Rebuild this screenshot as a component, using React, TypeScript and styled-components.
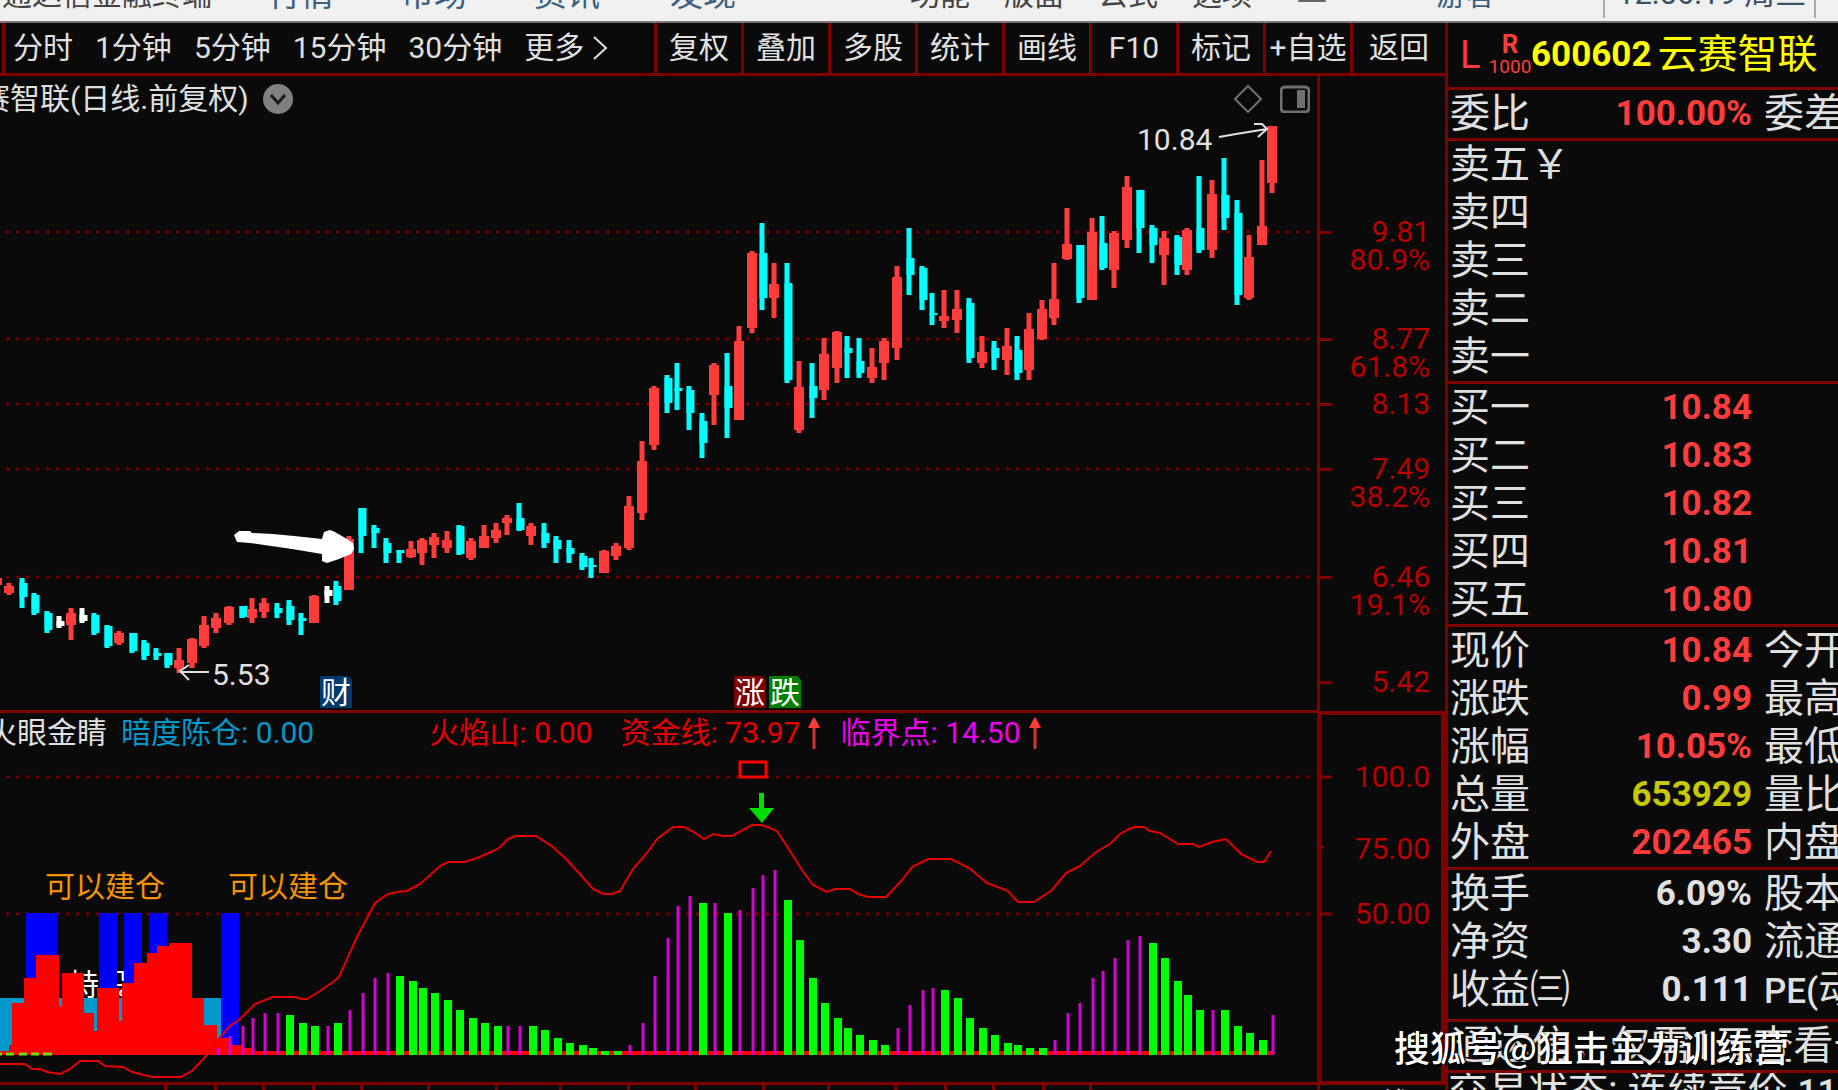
import React from "react";
import styled, { createGlobalStyle, css } from "styled-components";

const color = {
  bg: "#0a0a0a",
  line: "#800000",
  dot: "#6a0000",
  axis: "#b80000",
  text: "#e0e0e0",
  up: "#ff3c3c",
  down: "#00ffff",
  yellow: "#ffff00",
  volume: "#c8c800",
  muted: "#707070",
};

const mixedFont = `Roboto, "Noto Sans CJK SC", sans-serif`;
const cjkFont = `"Noto Sans CJK SC", Roboto, sans-serif`;

const GlobalStyle = createGlobalStyle`
  *, *::before, *::after { box-sizing: border-box; }
  body {
    margin: 0;
    background: ${color.bg};
    color: ${color.text};
    font-family: ${mixedFont};
    font-size: 30px;
    overflow: hidden;
  }
`;

const Screen = styled.div`
  position: relative;
  height: 100vh;
  display: flex;
  flex-direction: column;
  overflow: hidden;
`;

/* ---------- top menu ---------- */

const MenuBar = styled.nav`
  flex: none;
  height: 23px;
  display: flex;
  align-items: flex-end;
  background: #f0f0f0;
  border-bottom: 2px solid #777;
  overflow: hidden;
`;

const MenuItem = styled.a<{ $gap: number; $tone?: string; $size?: number }>`
  flex: none;
  margin: 0 0 14px ${(p) => p.$gap}px;
  font-family: ${cjkFont};
  font-size: ${(p) => p.$size ?? 30}px;
  line-height: 30px;
  color: ${(p) => p.$tone ?? "#444"};
  text-decoration: none;
  white-space: nowrap;
`;

const MailBase = styled.svg`
  flex: none;
  align-self: flex-start;
  margin-left: 46px;
`;

const Clock = styled.div`
  flex: none;
  margin-left: 107px;
  height: 18px;
  align-self: flex-start;
  display: flex;
  align-items: flex-end;
  padding: 0 8px 0 12px;
  border-left: 2px solid #aaa;
  border-right: 2px solid #aaa;
  white-space: nowrap;
`;

const ClockText = styled.time`
  margin-bottom: 9px;
  font-size: 31px;
  line-height: 30px;
  color: #3a5068;
`;

/* ---------- main split ---------- */

const Workspace = styled.main`
  flex: 1;
  min-height: 0;
  display: grid;
  grid-template-columns: minmax(0, 1fr) 393px;
`;

const ChartSide = styled.section`
  display: flex;
  flex-direction: column;
  min-width: 0;
  overflow: hidden;
`;

const Toolbar = styled.div`
  flex: none;
  height: 53px;
  display: flex;
  padding-left: 2px;
  border-bottom: 3px solid ${color.line};
`;

const PeriodGroup = styled.div`
  width: 652px;
  display: flex;
  align-items: center;
  gap: 22px;
  padding-left: 8px;
  border-left: 3px solid ${color.line};
`;

const buttonReset = css`
  margin: 0;
  padding: 0;
  border: 0;
  background: none;
  color: ${color.text};
  font-family: ${mixedFont};
  font-size: 30px;
  line-height: 40px;
  white-space: nowrap;
  cursor: pointer;
`;

const PeriodButton = styled.button`
  ${buttonReset}
  display: flex;
  align-items: center;
  gap: 8px;
`;

const ToolButton = styled.button<{ $last?: boolean }>`
  ${buttonReset}
  flex: ${(p) => (p.$last ? "1" : "0 0 87px")};
  border-left: 3px solid ${color.line};
`;

const IconButton = styled.button`
  ${buttonReset}
  display: flex;
`;

/* ---------- chart panes ---------- */

const Pane = styled.div`
  flex: none;
  display: grid;
  grid-template-columns: minmax(0, 1fr) 128px;
`;

const Plot = styled.div<{ $ruled?: boolean }>`
  min-width: 0;
  overflow: hidden;
  border: solid ${color.line};
  border-width: ${(p) => (p.$ruled ? "3px 0" : "0")};
`;

const Axis = styled.div`
  border-left: 3px solid ${color.line};
`;

const BoxedAxis = styled.div`
  margin-top: 1px;
  border: 4px solid ${color.line};
`;

const PaneHeader = styled.div<{ $height: number; $shift: number }>`
  height: ${(p) => p.$height}px;
  display: flex;
  align-items: center;
  padding-top: 2px;
  margin-left: -${(p) => p.$shift}px;
  line-height: 30px;
  white-space: nowrap;
`;

const ChartTitle = styled.h1`
  margin: 0 14px 0 0;
  font-size: 30px;
  font-weight: 400;
  line-height: 30px;
`;

const HeaderTools = styled.div`
  display: flex;
  gap: 18px;
  margin-left: auto;
  padding-right: 7px;
`;

const Reading = styled.span<{ $tone: string; $gap: number }>`
  display: flex;
  align-items: center;
  gap: 8px;
  margin-left: ${(p) => p.$gap}px;
  color: ${(p) => p.$tone};
  white-space: pre;
`;

const Drawing = styled.svg`
  display: block;
  width: 100%;
  font-family: ${mixedFont};
  font-size: 30px;
`;

const TimeStrip = styled.div`
  flex: 1;
  min-height: 0;
  display: grid;
  grid-template-columns: minmax(0, 1fr) 128px;
  overflow: hidden;
`;

const PeriodName = styled.div`
  border-left: 3px solid ${color.line};
  padding-left: 30px;
  font-size: 30px;
  line-height: 38px;
  white-space: nowrap;
`;

/* ---------- quote panel ---------- */

const QuotePanel = styled.aside`
  border-left: 3px solid ${color.line};
  overflow: hidden;
  font-size: 40px;
  line-height: 48px;
`;

const StockHeader = styled.header`
  height: 67px;
  display: flex;
  align-items: center;
  padding-left: 12px;
  border-bottom: 3px solid ${color.line};
  white-space: nowrap;
`;

const LevelMark = styled.span`
  width: 29px;
  font-size: 38px;
  color: ${color.up};
`;

const Margin = styled.span`
  width: 42px;
  display: flex;
  flex-direction: column;
  align-items: center;
  color: ${color.up};
`;

const MarginTop = styled.b`
  font-size: 26px;
  line-height: 24px;
`;

const MarginBase = styled.span`
  font-size: 19px;
  line-height: 22px;
`;

const StockCode = styled.b`
  font-size: 35px;
  color: ${color.yellow};
`;

const StockName = styled.h2`
  margin: 0 0 0 6px;
  font-size: 40px;
  font-weight: 400;
  color: ${color.yellow};
`;

const QuoteTable = styled.table`
  width: 100%;
  table-layout: fixed;
  border-collapse: collapse;
  td, th { padding: 0; }
`;

const QuoteBlock = styled.div<{ $pad?: number }>`
  padding: 0 0 ${(p) => p.$pad ?? 0}px 2px;
  border-bottom: 3px solid ${color.line};
`;

const NameCell = styled.th<{ $width?: number }>`
  width: ${(p) => (p.$width ? `${p.$width}px` : "auto")};
  height: 48px;
  font-weight: 400;
  text-align: left;
  white-space: nowrap;
`;

const ValueCell = styled.td<{ $tone?: string }>`
  width: 182px;
  font-size: 35px;
  font-weight: 700;
  text-align: right;
  white-space: nowrap;
  color: ${(p) => p.$tone ?? color.up};
`;

const SideCell = styled(NameCell)`
  && { padding-left: 12px; }
  overflow: hidden;
`;

const Latin = styled.span`
  font-size: 35px;
  font-weight: 500;
  line-height: 1;
`;

const Notice = styled.p<{ $line: number }>`
  margin: 0;
  padding-left: ${(p) => (p.$line > 40 ? 3 : 0)}px;
  line-height: ${(p) => p.$line}px;
  border-bottom: 3px solid ${color.line};
  white-space: nowrap;
  overflow: hidden;
`;

const Watermark = styled.div`
  position: absolute;
  right: 49px;
  bottom: 20px;
  font-family: ${cjkFont};
  font-size: 36px;
  font-weight: 500;
  line-height: 48px;
  color: #fff;
  text-shadow: 1px 1px 2px #000, 2px 2px 1px #000;
  white-space: nowrap;
`;

/* ---------- data ---------- */

type Tone = "r" | "c" | "w";
/* x of the wick, high, low, body top, body bottom */
type Candle = [Tone, number, number, number, number, number];

const candles: Candle[] = [
  ["r", -3, 578, 585, 578, 585], ["r", 9, 583, 595, 586, 593], ["c", 22, 578, 608, 583, 597],
  ["c", 34, 593, 615, 595, 613], ["c", 47, 611, 633, 613, 630], ["w", 59, 616, 628, 621, 626],
  ["r", 71, 608, 640, 613, 625], ["w", 82, 608, 623, 615, 621], ["c", 94, 613, 635, 615, 633],
  ["c", 107, 625, 648, 626, 646], ["r", 119, 631, 645, 633, 643], ["c", 132, 633, 653, 633, 651],
  ["c", 144, 640, 660, 643, 656], ["c", 156, 648, 660, 653, 656], ["c", 167, 653, 668, 653, 665],
  ["r", 179, 648, 673, 660, 668], ["r", 192, 638, 668, 639, 663], ["r", 204, 616, 648, 625, 646],
  ["r", 216, 613, 633, 618, 628], ["r", 229, 606, 625, 607, 623], ["c", 242, 606, 618, 606, 617],
  ["r", 252, 598, 623, 609, 618], ["r", 264, 598, 618, 603, 612], ["c", 277, 603, 618, 608, 613],
  ["c", 289, 600, 625, 606, 620], ["c", 301, 613, 635, 618, 621], ["r", 314, 595, 623, 596, 623],
  ["w", 327, 586, 603, 590, 596], ["c", 336, 581, 605, 586, 601], ["r", 349, 536, 590, 539, 590],
  ["c", 361, 508, 553, 508, 536], ["c", 374, 525, 548, 528, 533], ["c", 386, 538, 563, 543, 553],
  ["c", 399, 550, 563, 550, 553], ["r", 411, 541, 558, 549, 557], ["r", 422, 538, 565, 540, 553],
  ["r", 434, 533, 558, 537, 545], ["r", 447, 531, 553, 540, 548], ["c", 459, 525, 555, 526, 554],
  ["r", 471, 538, 560, 541, 558], ["r", 484, 525, 548, 536, 548], ["r", 496, 523, 543, 530, 538],
  ["r", 507, 515, 535, 518, 523], ["c", 519, 503, 531, 518, 530], ["r", 531, 523, 545, 526, 536],
  ["c", 544, 523, 548, 533, 543], ["c", 556, 536, 563, 540, 549], ["c", 569, 540, 563, 548, 554],
  ["c", 582, 553, 570, 556, 567], ["c", 591, 558, 578, 565, 567], ["r", 604, 550, 573, 551, 573],
  ["r", 616, 543, 560, 546, 556], ["r", 629, 496, 550, 506, 548], ["r", 642, 441, 520, 461, 513],
  ["r", 654, 386, 450, 388, 445], ["c", 667, 375, 413, 378, 403], ["c", 677, 363, 410, 388, 391],
  ["c", 689, 386, 430, 390, 413], ["c", 702, 413, 458, 421, 443], ["r", 714, 363, 425, 365, 395],
  ["c", 727, 353, 438, 386, 408], ["r", 739, 326, 420, 341, 420], ["r", 752, 251, 333, 253, 328],
  ["c", 762, 223, 310, 253, 298], ["r", 774, 263, 318, 284, 298], ["c", 787, 263, 383, 283, 380],
  ["r", 799, 361, 433, 387, 430], ["c", 812, 363, 418, 386, 398], ["r", 824, 338, 400, 354, 390],
  ["r", 837, 331, 383, 332, 368], ["c", 847, 336, 378, 348, 353], ["c", 859, 338, 378, 361, 373],
  ["r", 872, 348, 383, 367, 378], ["r", 884, 338, 380, 341, 363], ["r", 897, 266, 360, 277, 348],
  ["c", 909, 228, 295, 258, 275], ["c", 922, 266, 310, 268, 300], ["c", 932, 293, 325, 313, 315],
  ["r", 944, 290, 328, 316, 321], ["r", 957, 290, 333, 309, 320], ["c", 969, 298, 363, 303, 358],
  ["r", 982, 336, 368, 352, 363], ["c", 994, 341, 370, 348, 358], ["r", 1007, 328, 375, 346, 360],
  ["c", 1017, 336, 380, 350, 373], ["r", 1029, 313, 380, 329, 370], ["r", 1042, 300, 340, 309, 339],
  ["r", 1054, 263, 325, 299, 318], ["r", 1067, 208, 260, 244, 259], ["c", 1079, 245, 303, 245, 298],
  ["r", 1092, 218, 300, 232, 300], ["c", 1102, 216, 270, 243, 268], ["r", 1114, 231, 288, 233, 270],
  ["r", 1127, 176, 248, 187, 240], ["c", 1139, 190, 253, 190, 228], ["c", 1152, 225, 263, 228, 245],
  ["r", 1164, 231, 285, 238, 255], ["c", 1177, 235, 275, 237, 265], ["r", 1187, 228, 275, 230, 270],
  ["c", 1199, 176, 253, 228, 250], ["r", 1212, 180, 258, 194, 250], ["c", 1224, 158, 230, 195, 218],
  ["c", 1237, 200, 305, 213, 295], ["r", 1249, 235, 300, 257, 298], ["r", 1262, 160, 245, 226, 245],
  ["r", 1272, 126, 193, 126, 183],
];

/* m: rising, thin bar; g: falling, wide bar */
type Bar = ["m" | "g", number, number];

const bars: Bar[] = [
  ["m", 218, 1048], ["m", 230, 1036], ["m", 243, 1026], ["m", 253, 1018], ["m", 265, 1013],
  ["m", 278, 1013], ["g", 290, 1015], ["g", 303, 1023], ["g", 315, 1026], ["m", 328, 1026],
  ["g", 338, 1023], ["m", 350, 1010], ["m", 363, 993], ["m", 375, 978], ["m", 388, 973],
  ["g", 400, 976], ["g", 413, 981], ["g", 423, 988], ["g", 435, 993], ["g", 448, 1000],
  ["g", 460, 1010], ["g", 473, 1018], ["g", 485, 1023], ["g", 498, 1026], ["m", 508, 1026],
  ["m", 520, 1026], ["g", 533, 1026], ["g", 545, 1030], ["g", 558, 1038], ["g", 570, 1043],
  ["g", 583, 1045], ["g", 593, 1048], ["g", 605, 1051], ["g", 618, 1051], ["m", 630, 1045],
  ["m", 643, 1023], ["m", 655, 976], ["m", 668, 938], ["m", 678, 906], ["m", 690, 896],
  ["g", 703, 903], ["m", 715, 903], ["g", 728, 913], ["m", 740, 910], ["m", 753, 888],
  ["m", 763, 875], ["m", 775, 870], ["g", 788, 900], ["g", 800, 940], ["g", 813, 978],
  ["g", 825, 1003], ["g", 838, 1018], ["g", 848, 1028], ["g", 860, 1035], ["g", 873, 1040],
  ["g", 885, 1045], ["m", 898, 1028], ["m", 910, 1005], ["m", 923, 990], ["m", 933, 988],
  ["g", 945, 990], ["g", 958, 998], ["g", 970, 1018], ["g", 983, 1028], ["g", 995, 1035],
  ["g", 1008, 1043], ["g", 1018, 1045], ["g", 1030, 1048], ["g", 1043, 1048], ["m", 1055, 1040],
  ["m", 1068, 1013], ["m", 1080, 1003], ["m", 1093, 978], ["m", 1103, 971], ["m", 1115, 958],
  ["m", 1128, 940], ["m", 1140, 936], ["g", 1153, 943], ["g", 1165, 958], ["g", 1178, 981],
  ["g", 1188, 995], ["g", 1200, 1010], ["m", 1213, 1010], ["g", 1225, 1010], ["g", 1238, 1026],
  ["g", 1250, 1033], ["g", 1263, 1040], ["m", 1273, 1015],
];

/* left edge and top of each step of the red area */
const steps: [number, number][] = [
  [0, 1051], [9, 1045], [12, 1003], [24, 978], [36, 955], [59, 1006], [62, 973], [84, 1013],
  [94, 1031], [97, 988], [119, 1021], [122, 983], [134, 963], [147, 953], [157, 946], [169, 943],
  [192, 998], [204, 1025], [217, 1038], [229, 1045], [242, 1048], [252, 1051],
];

const areaPath = (() => {
  let d = "M0 1055";
  for (const [x, y] of steps) d += `H${x}V${y}`;
  return `${d}H1274V1055Z`;
})();

const blueBars: [number, number, number][] = [
  [26, 31, 1040], [99, 18, 1040], [124, 18, 1040], [149, 18, 1040], [221, 18, 1050],
];

const fundLine =
  "0,1064 25,1064 32,1069 40,1069 47,1072 60,1074 70,1069 80,1061 98,1061 105,1066 123,1067 132,1072 152,1077 181,1077 192,1071 207,1055 222,1035 230,1026 240,1019 255,1004 272,997 295,997 302,999 307,999 317,993 333,982 339,977 357,937 375,903 388,894 397,892 407,891 420,884 440,866 448,862 465,862 477,858 498,849 508,839 515,836 536,836 553,847 567,860 587,882 593,889 603,894 612,894 620,891 633,869 647,853 657,839 673,827 684,827 692,831 704,839 713,834 723,836 732,836 752,825 762,825 777,831 788,848 802,870 813,885 827,892 835,889 850,889 858,894 868,897 886,897 902,880 912,867 928,859 951,859 969,868 987,883 1008,891 1018,902 1034,902 1051,891 1066,873 1080,866 1096,852 1110,844 1120,834 1129,829 1135,827 1144,827 1150,831 1160,833 1178,844 1193,844 1199,847 1212,842 1226,839 1241,854 1257,862 1264,862 1271,851";

const priceLabels: [string, number][] = [
  ["9.81", 232], ["80.9%", 260], ["8.77", 339], ["61.8%", 367], ["8.13", 404], ["7.49", 469],
  ["38.2%", 497], ["6.46", 577], ["19.1%", 605], ["5.42", 682],
];
const priceTicks = [232, 339, 404, 469, 577, 682];
const indicatorLabels: [string, number][] = [["100.0", 777], ["75.00", 849], ["50.00", 914]];
const monthTicks = [165, 215, 263, 313, 361, 428, 496, 560, 628, 695, 763, 828, 895, 945, 993, 1043, 1090];

type Quote = [string, string?, string?, React.ReactNode?];

const sells: Quote[] = [["卖五￥"], ["卖四"], ["卖三"], ["卖二"], ["卖一"]];
const buys: Quote[] = [
  ["买一", "10.84"], ["买二", "10.83"], ["买三", "10.82"], ["买四", "10.81"], ["买五", "10.80"],
];
const prices: Quote[] = [
  ["现价", "10.84", color.up, "今开"],
  ["涨跌", "0.99", color.up, "最高"],
  ["涨幅", "10.05%", color.up, "最低"],
  ["总量", "653929", color.volume, "量比"],
  ["外盘", "202465", color.up, "内盘"],
];
const fundamentals: Quote[] = [
  ["换手", "6.09%", color.text, "股本"],
  ["净资", "3.30", color.text, "流通"],
  ["收益㈢", "0.111", color.text, <><Latin>PE(</Latin>动</>],
];

/* ---------- pieces ---------- */

const toneColor = { r: color.up, c: color.down, w: "#ffffff" };

function CandleMark({ data: [tone, x, high, low, top, bottom] }: { data: Candle }) {
  const wide = tone === "r";
  return (
    <g fill={toneColor[tone]}>
      <rect x={x - 2.5} y={high} width={5} height={low - high} />
      <rect x={wide ? x - 5 : x - 2.5} y={top} width={wide ? 10 : 8} height={bottom - top} />
    </g>
  );
}

function Gridline({ y }: { y: number }) {
  return <line x1={6} x2={1312} y1={y} y2={y} stroke={color.dot} strokeWidth={3} strokeDasharray="3 7" />;
}

function Badge({ x, fill, children }: { x: number; fill: string; children: string }) {
  return (
    <g>
      <path d={`M${x} 676h28l4 4v28h-32z`} fill={fill} />
      <text x={x + 1} y={703} fill="#fff">{children}</text>
    </g>
  );
}

function RiseArrow() {
  return (
    <svg width="12" height="32" viewBox="0 0 12 32" aria-hidden="true">
      <path d="M6 6V32" stroke="#d23434" strokeWidth="3" />
      <path d="M6 0L8 3L12 11H0L4 3Z" fill={color.up} />
    </svg>
  );
}

function QuoteRows({ rows, pad }: { rows: Quote[]; pad?: number }) {
  return (
    <QuoteBlock $pad={pad}>
      <QuoteTable>
        <tbody>
          {rows.map(([name, value, tone, side]) => (
            <tr key={name}>
              <NameCell scope="row" $width={120}>{name}</NameCell>
              <ValueCell $tone={tone}>{value}</ValueCell>
              <SideCell as={side ? "th" : "td"}>{side}</SideCell>
            </tr>
          ))}
        </tbody>
      </QuoteTable>
    </QuoteBlock>
  );
}

function PriceChart() {
  return (
    <Drawing height={590} viewBox="0 120 1317 590" preserveAspectRatio="xMinYMin slice" role="img" aria-label="日线">
      {priceTicks.slice(0, 5).map((y) => <Gridline key={y} y={y} />)}
      {candles.map((c) => <CandleMark key={c[1]} data={c} />)}
      <g fill="none" stroke={color.text} strokeWidth={2}>
        <path d="M1219 137L1236 134L1267 129M1254 124H1262L1267 129L1258 137" />
        <path d="M209 672H180M189 665L180 671L189 680" />
      </g>
      <text x={1137} y={150} fill={color.text}>10.84</text>
      <text x={212} y={685} fill={color.text}>5.53</text>
      <path
        fill="#fff"
        d="M234 535L239 531H250L252 533L273 534L294 536L322 539L324 532L330 530L335 532L347 539L353 543L354 549L351 554L339 559L327 563L322 561V554L292 549L250 543L237 542Z"
      />
      <Badge x={320} fill="#003a70">财</Badge>
      <Badge x={734} fill="#800000">涨</Badge>
      <Badge x={769} fill="#008000">跌</Badge>
    </Drawing>
  );
}

function IndicatorChart() {
  return (
    <Drawing height={331} viewBox="0 751 1317 331" preserveAspectRatio="xMinYMin slice" role="img" aria-label="火眼金睛">
      <Gridline y={777} />
      <Gridline y={914} />
      <text x={69} y={995} fill="#fff">持股</text>
      <rect x={0} y={998} width={221} height={57} fill="#0099cc" />
      {blueBars.map(([x, w, end]) => <rect key={x} x={x} y={913} width={w} height={end - 913} fill="#0000ff" />)}
      <path d={areaPath} fill="#ff0000" />
      <path d="M0 1054H2M6 1054H14M19 1054H27M31 1054H39M43 1054H52" stroke="#66e000" strokeWidth={3} />
      <polyline points={fundLine} fill="none" stroke="#e60000" strokeWidth={2} />
      {bars.map(([kind, x, top]) => {
        const w = kind === "g" ? 8 : 3;
        return (
          <rect key={x} x={x - w / 2} y={top} width={w} height={1055 - top} fill={kind === "g" ? "#00ff00" : "#d400d4"} />
        );
      })}
      <rect x={740} y={762} width={26} height={15} fill={color.bg} stroke="#ff0000" strokeWidth={3} />
      <path d="M759 793H764V808H774L762 823L749 808H759Z" fill="#00dd00" />
      <text x={45} y={897} fill="#f59300">可以建仓</text>
      <text x={228} y={897} fill="#f59300">可以建仓</text>
    </Drawing>
  );
}

const periods = ["分时", "1分钟", "5分钟", "15分钟", "30分钟"];
const tools = ["复权", "叠加", "多股", "统计", "画线", "F10", "标记", "+自选", "返回"];

export default function App() {
  return (
    <Screen>
      <GlobalStyle />
      <MenuBar>
        <MenuItem href="#" $gap={2}>通达信金融终端</MenuItem>
        <MenuItem href="#" $gap={56} $tone="#3a5f80" $size={33}>行情</MenuItem>
        <MenuItem href="#" $gap={67} $tone="#3a5f80" $size={33}>市场</MenuItem>
        <MenuItem href="#" $gap={67} $tone="#3a5f80" $size={33}>资讯</MenuItem>
        <MenuItem href="#" $gap={70} $tone="#3a5f80" $size={33}>发现</MenuItem>
        <MenuItem href="#" $gap={174}>功能</MenuItem>
        <MenuItem href="#" $gap={34}>版面</MenuItem>
        <MenuItem href="#" $gap={34}>公式</MenuItem>
        <MenuItem href="#" $gap={34}>选项</MenuItem>
        <MailBase width="28" height="2" aria-hidden="true">
          <rect width="28" height="2" rx="1" fill="#666" />
        </MailBase>
        <MenuItem href="#" $gap={110} $tone="#3a5f80">游客</MenuItem>
        <Clock><ClockText>12:56:19 周三</ClockText></Clock>
      </MenuBar>

      <Workspace>
        <ChartSide>
          <Toolbar>
            <PeriodGroup>
              {periods.map((p) => <PeriodButton key={p}>{p}</PeriodButton>)}
              <PeriodButton>
                更多
                <svg width="16" height="24" viewBox="0 0 16 24" fill="none" stroke={color.text} strokeWidth="2" aria-hidden="true">
                  <path d="M2 1L14 12L2 23" />
                </svg>
              </PeriodButton>
            </PeriodGroup>
            {tools.map((t, i) => <ToolButton key={t} $last={i === tools.length - 1}>{t}</ToolButton>)}
          </Toolbar>

          <Pane>
            <Plot>
              <PaneHeader $height={44} $shift={20}>
                <ChartTitle>赛智联(日线.前复权)</ChartTitle>
                <IconButton aria-label="展开">
                  <svg width="30" height="30" viewBox="0 0 30 30">
                    <circle cx="15" cy="15" r="15" fill="#808080" />
                    <path d="M8 11L15 19L22 11" fill="none" stroke="#1a1a1a" strokeWidth="3" />
                  </svg>
                </IconButton>
                <HeaderTools>
                  <IconButton aria-label="标注">
                    <svg width="28" height="28" viewBox="0 0 28 28">
                      <path d="M14 1L27 14L14 27L1 14Z" fill="none" stroke={color.muted} strokeWidth="2" />
                    </svg>
                  </IconButton>
                  <IconButton aria-label="侧栏">
                    <svg width="30" height="28" viewBox="0 0 30 28">
                      <rect x="1" y="2" width="28" height="25" rx="4" fill="none" stroke={color.muted} strokeWidth="3" />
                      <rect x="17" y="5" width="8" height="18" fill={color.muted} />
                    </svg>
                  </IconButton>
                </HeaderTools>
              </PaneHeader>
              <PriceChart />
            </Plot>
            <Axis>
              <Drawing height={634} viewBox="1320 76 125 634" preserveAspectRatio="xMinYMin slice">
                {priceTicks.map((y) => <rect key={y} x={1320} y={y - 1} width={12} height={3} fill={color.line} />)}
                {priceLabels.map(([label, y]) => (
                  <text key={label} x={1430} y={y + 10} textAnchor="end" fill={color.axis}>{label}</text>
                ))}
              </Drawing>
            </Axis>
          </Pane>

          <Pane>
            <Plot $ruled>
              <PaneHeader $height={38} $shift={13}>
                <Reading $tone={color.text} $gap={0}>火眼金睛</Reading>
                <Reading $tone="#0099cc" $gap={14}>暗度陈仓: 0.00</Reading>
                <Reading $tone="#e60000" $gap={115}>火焰山: 0.00</Reading>
                <Reading $tone="#e60000" $gap={28}>资金线: 73.97<RiseArrow /></Reading>
                <Reading $tone="#f000f0" $gap={20}>临界点: 14.50<RiseArrow /></Reading>
              </PaneHeader>
              <IndicatorChart />
            </Plot>
            <BoxedAxis>
              <Drawing height={366} viewBox="1321 715 120 366" preserveAspectRatio="xMinYMin slice">
                <path d="M1321 777H1332M1321 847H1324M1321 914H1332" stroke={color.line} strokeWidth={3} />
                {indicatorLabels.map(([label, y]) => (
                  <text key={label} x={1430} y={y + 10} textAnchor="end" fill={color.axis}>{label}</text>
                ))}
              </Drawing>
            </BoxedAxis>
          </Pane>

          <TimeStrip>
            <Drawing height={34} viewBox="0 0 1317 34" preserveAspectRatio="xMinYMin slice" aria-hidden="true">
              {monthTicks.map((x) => <rect key={x} x={x - 1} y={0} width={3} height={34} fill={color.line} />)}
            </Drawing>
            <PeriodName>日线</PeriodName>
          </TimeStrip>
        </ChartSide>

        <QuotePanel>
          <StockHeader>
            <LevelMark>L</LevelMark>
            <Margin>
              <MarginTop>R</MarginTop>
              <MarginBase>1000</MarginBase>
            </Margin>
            <StockCode>600602</StockCode>
            <StockName>云赛智联</StockName>
          </StockHeader>
          <QuoteRows rows={[["委比", "100.00%", color.up, "委差"]]} />
          <QuoteRows rows={sells} />
          <QuoteRows rows={buys} />
          <QuoteRows rows={prices} />
          <QuoteRows rows={fundamentals} pad={5} />
          <Notice $line={48}>通达信，仅需1元查看十</Notice>
          <Notice $line={36}>交易状态: 连续竞价 <Latin>11</Latin></Notice>
        </QuotePanel>
      </Workspace>

      <Watermark>搜狐号@狙击主力训练营</Watermark>
    </Screen>
  );
}
